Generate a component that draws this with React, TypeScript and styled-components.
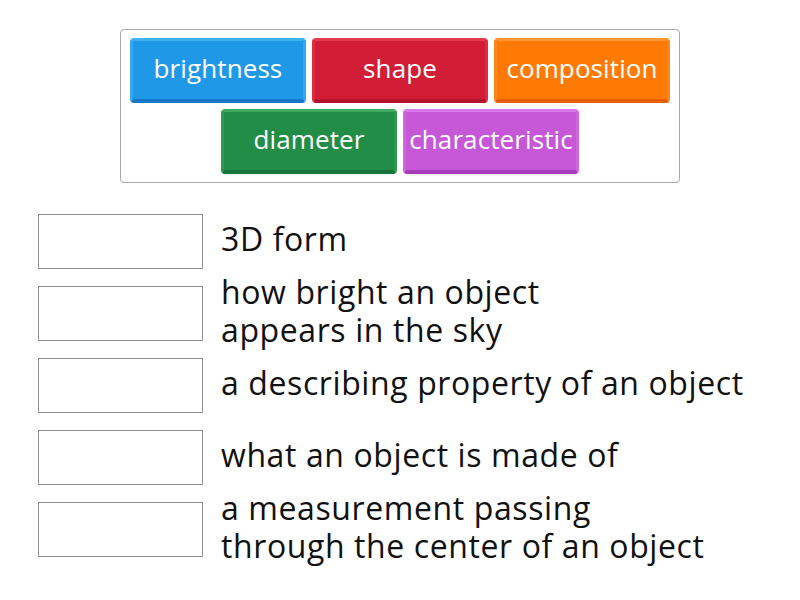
import React from "react";
import styled, { createGlobalStyle } from "styled-components";

const Global = createGlobalStyle`
  html, body { margin: 0; padding: 0; background: #ffffff; }
  body { font-family: "Open Sans", "Noto Sans", sans-serif; }
`;

const Page = styled.div`
  width: 800px;
  height: 600px;
  box-sizing: border-box;
  padding-top: 29px;
  display: flex;
  flex-direction: column;
  align-items: center;
`;

const Bank = styled.div`
  width: 560px;
  height: 154px;
  box-sizing: border-box;
  border: 1px solid #a8a8a8;
  border-radius: 4px;
  padding: 8px 9px;
  display: flex;
  flex-wrap: wrap;
  justify-content: center;
  align-content: flex-start;
  gap: 6px;
`;

type Tone = { face: string; top: string; side: string; bottom: string };

const tones: Record<string, Tone> = {
  blue: { face: "#1f98e8", top: "#3fb2f6", side: "#33a7f0", bottom: "#1677c9" },
  red: { face: "#d21d37", top: "#e6394f", side: "#dc2a43", bottom: "#b3122a" },
  orange: { face: "#ff7a05", top: "#ff9530", side: "#ff861a", bottom: "#e35f00" },
  green: { face: "#218d47", top: "#3eaa62", side: "#2c9a53", bottom: "#16733a" },
  purple: { face: "#c657d6", top: "#d978e8", side: "#cf66de", bottom: "#a93cba" },
};

const Tile = styled.div<{ $tone: Tone }>`
  width: 176px;
  height: 65px;
  box-sizing: border-box;
  border-radius: 4px;
  background: ${(p) => p.$tone.face};
  border-top: 3px solid ${(p) => p.$tone.top};
  border-left: 3px solid ${(p) => p.$tone.side};
  border-right: 3px solid ${(p) => p.$tone.side};
  border-bottom: 4px solid ${(p) => p.$tone.bottom};
  display: flex;
  align-items: center;
  justify-content: center;
  color: #ffffff;
  font-family: "Open Sans", "Noto Sans", sans-serif;
  font-size: 26px;
  line-height: 1;
  padding-bottom: 5px;
  letter-spacing: 0.1px;
  white-space: nowrap;
`;

const Rows = styled.div`
  margin-top: 31px;
  width: 800px;
  box-sizing: border-box;
  padding-left: 38px;
  display: flex;
  flex-direction: column;
  gap: 17px;
`;

const Row = styled.div`
  display: flex;
  align-items: center;
  height: 55px;
  gap: 18px;
`;

const Slot = styled.div`
  width: 165px;
  height: 55px;
  box-sizing: border-box;
  border: 1px solid #8f8f8f;
  background: #fff;
  flex: none;
`;

const Clue = styled.div`
  font-family: "Open Sans", "Noto Sans", sans-serif;
  font-size: 32px;
  line-height: 38px;
  letter-spacing: 0.6px;
  color: #111111;
  white-space: nowrap;
  margin-top: -5px;
`;

const words: [string, string][] = [
  ["brightness", "blue"],
  ["shape", "red"],
  ["composition", "orange"],
  ["diameter", "green"],
  ["characteristic", "purple"],
];

const clues: string[][] = [
  ["3D form"],
  ["how bright an object", "appears in the sky"],
  ["a describing property of an object"],
  ["what an object is made of"],
  ["a measurement passing", "through the center of an object"],
];

export default function App() {
  return (
    <>
      <Global />
      <Page>
        <Bank>
          {words.map(([w, t]) => (
            <Tile key={w} $tone={tones[t]}>
              {w}
            </Tile>
          ))}
        </Bank>
        <Rows>
          {clues.map((lines, i) => (
            <Row key={i}>
              <Slot />
              <Clue>
                {lines.map((l, j) => (
                  <React.Fragment key={j}>
                    {j > 0 && <br />}
                    {l}
                  </React.Fragment>
                ))}
              </Clue>
            </Row>
          ))}
        </Rows>
      </Page>
    </>
  );
}
